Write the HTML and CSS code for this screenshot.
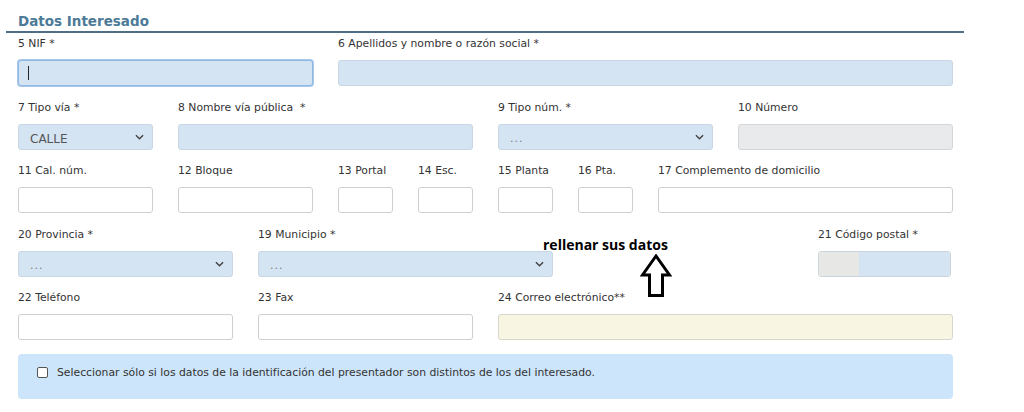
FILE: index.html
```html
<!DOCTYPE html>
<html lang="es">
<head>
<meta charset="utf-8">
<title>Datos Interesado</title>
<link rel="stylesheet" href="styles.css">
</head>
<body>
<div class="page">
  <h2 class="section-title">Datos Interesado</h2>
  <div class="form-grid">
    <div class="field c4"><label>5 NIF *</label><div class="ctl blue focus"><span class="caret"></span></div></div>
    <div class="field c8"><label>6 Apellidos y nombre o razón social *</label><div class="ctl blue"></div></div>

    <div class="field c2"><label>7 Tipo vía *</label><div class="ctl blue sel"><span class="val">CALLE</span><svg class="chev" viewBox="0 0 10 6" width="9" height="6"><path d="M1 1l4 4 4-4" fill="none" stroke="#444" stroke-width="1.6"/></svg></div></div>
    <div class="field c4"><label>8 Nombre vía pública &nbsp;*</label><div class="ctl blue"></div></div>
    <div class="field c3"><label>9 Tipo núm. *</label><div class="ctl blue sel"><span class="val dots">...</span><svg class="chev" viewBox="0 0 10 6" width="9" height="6"><path d="M1 1l4 4 4-4" fill="none" stroke="#444" stroke-width="1.6"/></svg></div></div>
    <div class="field c3"><label>10 Número</label><div class="ctl gray"></div></div>

    <div class="field c2"><label>11 Cal. núm.</label><div class="ctl"></div></div>
    <div class="field c2"><label>12 Bloque</label><div class="ctl"></div></div>
    <div class="field c1"><label>13 Portal</label><div class="ctl"></div></div>
    <div class="field c1"><label>14 Esc.</label><div class="ctl"></div></div>
    <div class="field c1"><label>15 Planta</label><div class="ctl"></div></div>
    <div class="field c1"><label>16 Pta.</label><div class="ctl"></div></div>
    <div class="field c4"><label>17 Complemento de domicilio</label><div class="ctl"></div></div>

    <div class="field c3"><label>20 Provincia *</label><div class="ctl blue sel"><span class="val dots">...</span><svg class="chev" viewBox="0 0 10 6" width="9" height="6"><path d="M1 1l4 4 4-4" fill="none" stroke="#444" stroke-width="1.6"/></svg></div></div>
    <div class="field c4"><label>19 Municipio *</label><div class="ctl blue sel"><span class="val dots">...</span><svg class="chev" viewBox="0 0 10 6" width="9" height="6"><path d="M1 1l4 4 4-4" fill="none" stroke="#444" stroke-width="1.6"/></svg></div></div>
    <div class="field c3 spacer"></div>
    <div class="field c2 cp-field"><label>21 Código postal *</label><div class="ctl cp"><span class="cp-a"></span><span class="cp-b"></span></div></div>

    <div class="field c3"><label>22 Teléfono</label><div class="ctl"></div></div>
    <div class="field c3"><label>23 Fax</label><div class="ctl"></div></div>
    <div class="field c6"><label>24 Correo electrónico**</label><div class="ctl yellow"></div></div>

    <div class="notice"><span class="check"></span><span>Seleccionar sólo si los datos de la identificación del presentador son distintos de los del interesado.</span></div>
  </div>

  <div class="annotation">
    <div class="annot-text">rellenar sus datos</div>
    <svg class="annot-arrow" viewBox="0 0 32 44" width="32" height="44"><path d="M16 2L2.5 21H9.5V41.5H22.5V21H29.5Z" fill="#fff" stroke="#000" stroke-width="3" stroke-linejoin="miter"/></svg>
  </div>
</div>
</body>
</html>
```

FILE: styles.css
```css
* { box-sizing: border-box; }
html, body { margin: 0; padding: 0; background: #fff; }
body {
  font-family: "DejaVu Sans", Verdana, sans-serif;
  color: #333;
}
.page {
  position: relative;
  width: 1024px;
  height: 412px;
  padding: 11px 0 0 0;
}
.section-title {
  margin: 0 60px 0 6px;
  padding: 2px 0 2px 12px;
  font-size: 13.5px;
  font-weight: bold;
  color: #4d7b97;
  border-bottom: 2px solid #4f6f89;
  line-height: 16px;
}
.form-grid {
  display: grid;
  grid-template-columns: repeat(12, 55px);
  column-gap: 25px;
  row-gap: 13.5px;
  padding: 3px 0 0 18px;
}
.field { display: flex; flex-direction: column; }
.field label {
  font-size: 10.8px;
  line-height: 16px;
  height: 16px;
  margin-bottom: 8px;
  color: #333;
  white-space: nowrap;
}
.c1 { grid-column: span 1; }
.c2 { grid-column: span 2; }
.c3 { grid-column: span 3; }
.c4 { grid-column: span 4; }
.c6 { grid-column: span 6; }
.c8 { grid-column: span 8; }
.ctl {
  height: 26px;
  border: 1px solid #cfcfcf;
  border-radius: 3px;
  background: #fff;
  display: flex;
  align-items: center;
}
.ctl.blue { background: #d4e4f3; border-color: #c9d7e4; }
.ctl.gray { background: #e9eaec; border-color: #d4d6d8; }
.ctl.yellow { background: #f8f6e3; border-color: #d8d7cc; }
.ctl.focus {
  border-color: #8fb8e3;
  box-shadow: 0 0 0 1px #a9c8ea;
}
.caret {
  display: block;
  width: 1px;
  height: 14px;
  background: #222;
  margin-left: 9px;
}
.sel { justify-content: space-between; padding: 0 8px 0 11px; }
.sel .val { font-size: 12px; color: #555; padding-top: 4px; }
.sel .val.dots { color: #777; font-size: 11px; letter-spacing: 1px; padding-top: 3px; }
.chev { display: block; }
.cp-field .ctl.cp { border-color: #cdd5dc; overflow: hidden; }
.cp-a { width: 40px; height: 100%; background: #e7e7e5; }
.cp-b { flex: 1; height: 100%; background: #d4e4f3; }
.cp-field { margin-right: 2px; }
.notice {
  grid-column: 1 / -1;
  margin-top: 0;
  height: 45px;
  background: #cce5fa;
  border-radius: 4px;
  display: flex;
  align-items: center;
  padding: 0 0 7px 19px;
  font-size: 10.8px;
  color: #333;
}
.check {
  width: 11px;
  height: 11px;
  border: 1px solid #555;
  border-radius: 2px;
  background: #fff;
  margin-right: 9px;
}
.annotation {
  position: absolute;
  left: 543px;
  top: 236px;
  display: flex;
  flex-direction: column;
  align-items: flex-start;
}
.annot-text {
  font-family: "Open Sans", "Noto Sans", sans-serif;
  font-weight: 700;
  font-size: 14px;
  line-height: 18px;
  color: #000;
}
.annot-arrow { margin-left: 97px; margin-top: 0; display: block; }
```
